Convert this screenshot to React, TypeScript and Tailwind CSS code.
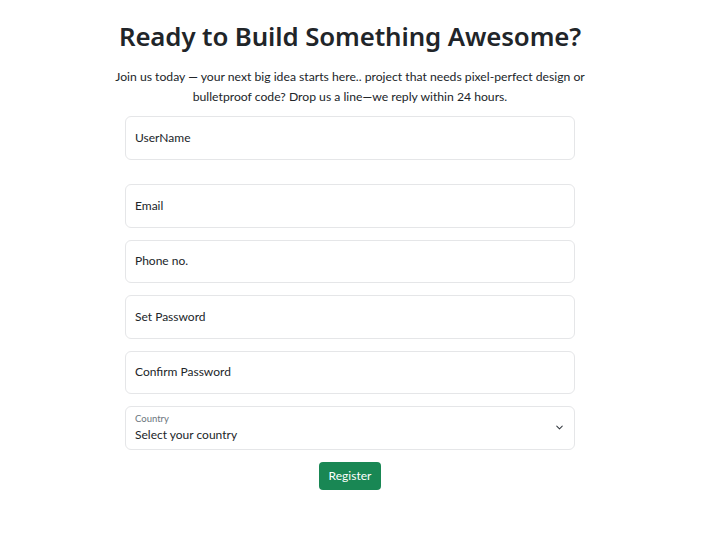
import { ChevronDown } from 'lucide-react';

const fields = ['UserName', 'Email', 'Phone no.', 'Set Password', 'Confirm Password'];

export default function App() {
  return (
    <div className="min-h-[537px] bg-white text-[#212529] pr-[5px]" style={{ fontFamily: 'Lato, "Noto Sans", sans-serif' }}>
      <div className="w-[480px] mx-auto pt-[18px] text-center">
        <h2 className="text-[25.8px] leading-[36px] font-semibold tracking-[-0.1px]" style={{ fontFamily: '"Noto Sans", sans-serif' }}>
          Ready to Build Something Awesome?
        </h2>
        <p className="mt-[13px] text-[12.2px] leading-[19.5px]">
          Join us today — your next big idea starts here.. project that needs pixel-perfect design or bulletproof code? Drop us a line—we reply within 24 hours.
        </p>
      </div>

      <form className="w-[450px] mx-auto mt-[10px] flex flex-col">
        {fields.map((f, i) => (
          <div
            key={f}
            className={`h-[43.5px] flex items-center px-[9px] border border-[#e5e6e8] rounded-[6px] text-[12px] ${i === 0 ? 'mb-[24.5px]' : 'mb-[12px]'}`}
          >
            {f}
          </div>
        ))}

        {/* country select */}
        <div className="h-[43.5px] flex items-center justify-between pl-[9px] pr-[9px] border border-[#e5e6e8] rounded-[6px]">
          <div className="flex flex-col leading-none -mt-[1px]">
            <span className="text-[9.5px] text-[#6c757d]">Country</span>
            <span className="text-[12px] mt-[5px]">Select your country</span>
          </div>
          <ChevronDown className="w-[11px] h-[11px] text-[#343a40] -mt-[1px]" strokeWidth={2.2} />
        </div>

        <div className="flex justify-center mt-[12px]">
          <button type="button" className="h-[28px] px-[10px] rounded-[4px] bg-[#198754] text-white text-[12px]">
            Register
          </button>
        </div>
      </form>
    </div>
  );
}
